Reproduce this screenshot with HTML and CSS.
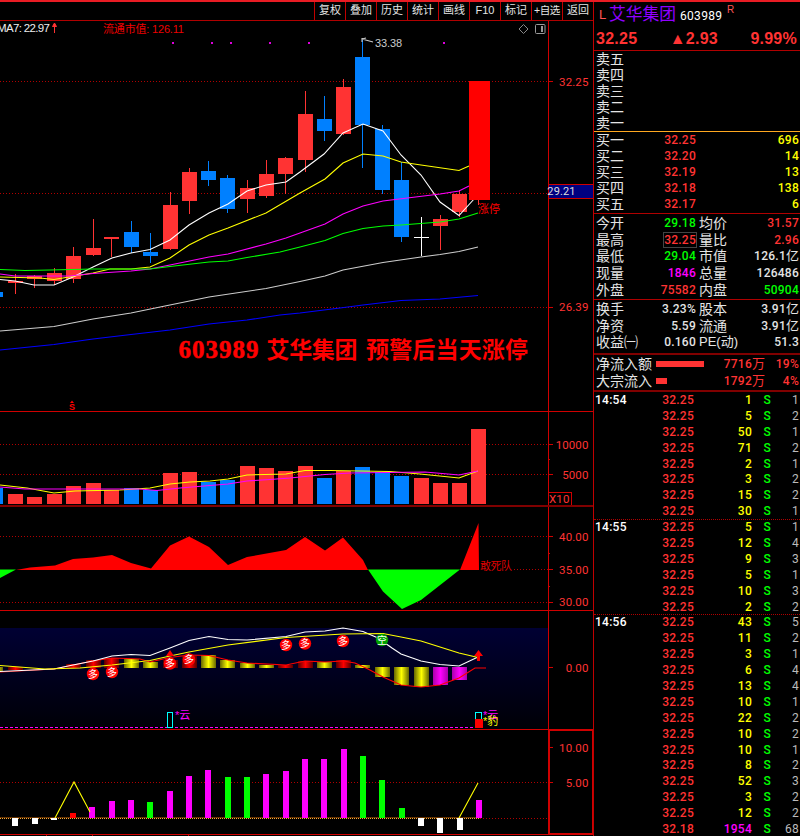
FILE: index.html
```html
<!DOCTYPE html>
<html lang="zh-CN">
<head>
    <meta charset="UTF-8">
    <meta name="viewport" content="width=device-width, initial-scale=1.0">
    <title>艾华集团 603989</title>
    <link rel="stylesheet" href="styles.css">
</head>
<body>
    <div class="app">
        <div class="charts">
            <div class="toolbar">
                <span>复权</span><span>叠加</span><span>历史</span><span>统计</span><span>画线</span><span>F10</span><span>标记</span><span class="tight">+自选</span><span>返回</span>
            </div>

            <!-- K line -->
            <svg class="panel" width="593" height="391" viewBox="0 21 593 391">
                <path class="grid" d="M0 81.5H548M0 193.5H548M0 307.5H548"/>
                <g id="candles"></g>
                <path class="line white" d="M0 279.5L15 281L34 285H54L73 277L93 267L112 258L131 253L150 249.5L170 240L189 225L209 213L228 204L247 191L266 185L286 182L300 172L324 154L343 133L363 124L383 131L401 155L421 175L440 202L459 215.5L475 198"/>
                <path class="line yellow" d="M0 277L40 278L54 279.5L75 276L93 273L110 269H131L150 267L170 258L189 245L209 235L228 228L266 213L300 193L325 179L343 163L363 154L383 156L401 162L421 165L459 170.5L469 166"/>
                <path class="line magenta" d="M0 274L15 276H70L93 273.5L131 271L150 269L170 265L209 257L228 254L266 244L286 238L300 233L325 224L343 214L363 206L383 201L440 194L459 191L469 186"/>
                <path class="line green" d="M0 269.5L25 270.5L50 270L93 269H150L170 266.5L209 262L228 261L247 257.5L280 252L300 247L325 240.5L343 233.5L363 228.5L383 226L401 225L440 222L459 219L478 213"/>
                <path class="line gray" d="M0 331L54 326.5L93 319L131 313L165 306L209 297L266 288.5L300 281.5L325 276L343 270L383 262.5L421 257L440 254.5L459 251.5L478 247"/>
                <path class="line blue" d="M0 350L54 344.5L93 339L131 334.5L170 330L209 324L247 320L280 315L300 313L340 308L363 305L401 300.5L440 299L478 295.5"/>
                <g class="crisp">
                    <rect x="468.5" y="81" width="21" height="119" fill="#f00"/>
                    <rect x="478" y="200" width="1" height="5" fill="#f33"/>
                </g>
                <path class="line gray" d="M362 38V42M362 39L366 38M362 39L373 42"/>
                <g class="dots">
                    <rect x="172" y="42" width="2" height="2"/><rect x="211" y="42" width="2" height="2"/><rect x="230" y="42" width="2" height="2"/><rect x="269" y="42" width="2" height="2"/><rect x="308" y="42" width="2" height="2"/><rect x="443" y="42" width="2" height="2"/>
                </g>
                <text class="t12" x="-3" y="32" fill="#eee" textLength="53">MA7: 22.97</text>
                <path d="M54.5 33V24M52.5 26.5L54.5 23L56.5 26.5Z" stroke="#f33" fill="#f33"/>
                <text class="t11" x="103" y="33" fill="#e00" textLength="81">流通市值: 126.11</text>
                <text class="t11" x="375" y="47" fill="#ccc" textLength="27">33.38</text>
                <path d="M519 29L523.5 24.5L528 29L523.5 33.5Z" fill="none" stroke="#888"/>
                <rect x="535.5" y="24.5" width="9.5" height="9" rx="1" fill="none" stroke="#999"/>
                <rect x="541" y="26" width="2" height="6" fill="#999"/>
                <text class="t11" x="478" y="213" fill="#f00" textLength="22">涨停</text>
                <text class="big num" x="178.5" y="358" textLength="80">603989</text>
                <text class="big" x="266.5" y="358" textLength="91">艾华集团</text>
                <text class="big" x="366" y="358" textLength="162">预警后当天涨停</text>
                <text class="mark" x="69" y="410">S</text>
                <path d="M70 403L72 400.5L74 403Z" fill="#f00"/>
                <g class="axis">
                    <path d="M548.5 20V411M0 411.5H593M548 81.5H553M548 307.5H553"/>
                    <rect x="548.5" y="184.5" width="45" height="14" fill="#000080"/>
                    <text x="588.5" y="86">32.25</text>
                    <text x="575.5" y="195" class="cur">29.21</text>
                    <text x="588.5" y="311">26.39</text>
                </g>
            </svg>

            <!-- volume -->
            <svg class="panel" width="593" height="95" viewBox="0 412 593 95">
                <path class="grid" d="M0 444.5H548M0 474.5H548"/>
                <g id="volume"></g>
                <path class="line yellow" d="M0 485L27 488L54 493L75 491L120 490L150 488L170 484L190 482L210 481L228 479L247 475L286 474L305 470.5H330L390 471.5L420 474L459 478L478 471"/>
                <path class="line magenta" d="M0 487L25 489H140L157 490.5L180 488L228 484L247 481L270 479.5L290 478L325 474.5L350 473L425 472L459 475L478 471"/>
                <g class="axis">
                    <path d="M548.5 412V507M548 444.5H553M548 459.5H550M548 474.5H553M549 492.5H571.5V505"/>
                    <path class="dark" d="M0 506H593"/>
                    <text x="588.5" y="449">10000</text>
                    <text x="588.5" y="479">5000</text>
                    <text x="569.5" y="503">X10</text>
                </g>
            </svg>

            <svg class="panel" width="593" height="104" viewBox="0 507 593 104">
                <path class="grid" d="M0 536.5H548M514 569.5H548M0 602.5H548"/>
                <path fill="#f00" d="M16 570L30 567.5L55 565.5L73 559L93 557.5L112 555L131 563L151 568.5L170 545.5L189 536.5L209 547L228 565L247 557L286 550L305 537L325 550.5L343 537.5L363 560L368 570ZM460 570L478.5 523L479 570Z"/>
                <path fill="#0f0" d="M0 569.5H16L0 578ZM368 569.5L383 591.5L402 609L421 600L460 569.5Z"/>
                <text class="t11" x="480" y="570" fill="#d00" textLength="32">敢死队</text>
                <g class="axis">
                    <path d="M548.5 507V611M0 610.5H593M548 536.5H553M548 553.5H550M548 569.5H553M548 586.5H550M548 602.5H553"/>
                    <text x="588.5" y="541">40.00</text>
                    <text x="588.5" y="574">35.00</text>
                    <text x="588.5" y="606">30.00</text>
                </g>
            </svg>

            <!-- long / short -->
            <svg class="panel" width="593" height="119" viewBox="0 611 593 119">
                <defs>
                    <linearGradient id="sky" x2="0" y2="1"><stop offset="0" stop-color="#000033"/><stop offset="1" stop-color="#000006"/></linearGradient>
                    <linearGradient id="barY"><stop offset="0" stop-color="#660"/><stop offset=".5" stop-color="#ff0"/><stop offset="1" stop-color="#660"/></linearGradient>
                    <linearGradient id="barR"><stop offset="0" stop-color="#500"/><stop offset=".5" stop-color="#f00"/><stop offset="1" stop-color="#500"/></linearGradient>
                    <linearGradient id="barM"><stop offset="0" stop-color="#a0a"/><stop offset=".5" stop-color="#f0f"/><stop offset="1" stop-color="#a0a"/></linearGradient>
                </defs>
                <rect y="628" width="548" height="101" fill="url(#sky)"/>
                <g id="macd"></g>
                <path class="line red" d="M0 672L54 669L73 665L93 661L112 658L140 659L150 662L170 657.5L189 655L209 655.5L228 660L247 663L286 665L305 661L325 662L343 661L355 663L368 669L383 677L401 685L421 687L440 685L459 678L475 668H486"/>
                <path class="line white" d="M0 671.5L54 669L73 665L93 661L112 656L131 654.5L150 655.5L170 648L189 640.5L209 636.5L228 639.5L247 640L286 636.5L305 632L325 631L343 628L363 631.5L378 638L392 648L401 654L421 661L440 664.5L459 666L478 657"/>
                <path class="line yellow" d="M0 665.5L45 669L80 668L112 665L150 660.5L170 656L189 652L228 645L286 637.5L343 634L383 633.5L401 637L421 641L459 653L478 657.5"/>
                <path d="M166 656L170 650L174 656ZM474 656L478.5 650L483 656H480V661H477V656Z" fill="#f00"/>
                <g id="badges"></g>
                <path d="M0 727.5H473" stroke="#f0f" stroke-dasharray="3 2" class="crisp"/>
                <rect x="167.5" y="712.5" width="5" height="15" fill="#000" stroke="#0ff"/>
                <rect x="475.5" y="712.5" width="6" height="15" fill="#000" stroke="#0ff"/>
                <rect x="475" y="719" width="8" height="9" fill="#f00"/>
                <text class="t11" x="175" y="718.5" fill="#f0f">*云</text>
                <text class="t11" x="483" y="718.5" fill="#f0f">*云</text>
                <text class="t11" x="483" y="725" fill="#ff0">*豹</text>
                <g class="axis">
                    <path d="M548.5 611V730M0 729.5H593M548 667.5H553"/>
                    <text x="588.5" y="672">0.00</text>
                </g>
            </svg>

            <svg class="panel" width="593" height="106" viewBox="0 730 593 106">
                <path class="grid" d="M0 782.5H548M480 818.5H548"/>
                <path d="M0 817.5H480" stroke="#630"/>
                <path d="M0 818.5H480" stroke="#fa3" stroke-dasharray="1 1" class="crisp"/>
                <g id="power"></g>
                <path class="line yellow" d="M55 818L74 782L90 812M459 818L478 783"/>
                <g class="axis">
                    <path d="M0 834.5H548M46.5 835V836M92.5 835V836M188.5 835V836M548 747.5H553M548 764.5H550M548 782.5H553"/>
                    <rect class="frame" x="549" y="730" width="44" height="104"/>
                    <text x="588.5" y="752">10.00</text>
                    <text x="588.5" y="787">5.00</text>
                </g>
            </svg>
        </div>

        <div class="quote">
            <div class="title">
                <span class="tag">L</span><span class="name">艾华集团</span><span class="code">603989</span><span class="sup">R</span>
            </div>
            <div class="price"><b>32.25</b><b>▲2.93</b><b>9.99%</b></div>

            <div class="book sell">
                <div><span>卖五</span></div>
                <div><span>卖四</span></div>
                <div><span>卖三</span></div>
                <div><span>卖二</span></div>
                <div><span>卖一</span></div>
            </div>
            <div class="book buy">
                <div><span>买一</span><b class="up">32.25</b><b class="vol">696</b></div>
                <div><span>买二</span><b class="up">32.20</b><b class="vol">14</b></div>
                <div><span>买三</span><b class="up">32.19</b><b class="vol">13</b></div>
                <div><span>买四</span><b class="up">32.18</b><b class="vol">138</b></div>
                <div><span>买五</span><b class="up">32.17</b><b class="vol">6</b></div>
            </div>

            <div class="stats">
                <div><span>今开</span><b class="down">29.18</b><span>均价</span><b class="up">31.57</b></div>
                <div><span>最高</span><b class="up"><i class="box">32.25</i></b><span>量比</span><b class="up">2.96</b></div>
                <div><span>最低</span><b class="down">29.04</b><span>市值</span><b>126.1<em>亿</em></b></div>
                <div><span>现量</span><b class="now">1846</b><span>总量</span><b>126486</b></div>
                <div><span>外盘</span><b class="up">75582</b><span>内盘</span><b class="down">50904</b></div>
            </div>
            <div class="stats second">
                <div><span>换手</span><b>3.23%</b><span>股本</span><b>3.91<em>亿</em></b></div>
                <div><span>净资</span><b>5.59</b><span>流通</span><b>3.91<em>亿</em></b></div>
                <div><span>收益㈠</span><b>0.160</b><span class="pe">PE(动)</span><b>51.3</b></div>
            </div>
            <div class="flow">
                <div><span>净流入额</span><i><u style="width:48px"></u></i><b>7716<em>万</em></b><b>19%</b></div>
                <div><span>大宗流入</span><i><u style="width:11px"></u></i><b>1792<em>万</em></b><b>4%</b></div>
            </div>
            <div class="ticks" id="ticks"></div>
        </div>
    </div>
    <script src="script.js"></script>
</body>
</html>
```

FILE: styles.css
```css
* {
    box-sizing: border-box;
}
body {
    margin: 0;
    background-color: #000;
    color: #e4e4e4;
    font-family: "Liberation Sans", "Noto Sans CJK SC", sans-serif;
    overflow: hidden;
}
.app {
    display: flex;
    width: 800px;
    height: 836px;
    border-top: 2px solid #e81c24;
}
.charts {
    width: 593px;
    display: flex;
    flex-direction: column;
}
.toolbar {
    height: 19px;
    border-bottom: 1px solid #b00000;
    display: flex;
    justify-content: flex-end;
}
.toolbar span {
    width: 31px;
    border-left: 1px solid #c00000;
    font-size: 11px;
    line-height: 17px;
    text-align: center;
    white-space: nowrap;
}
.toolbar .tight {
    font-size: 10.5px;
    letter-spacing: -0.4px;
}
.panel {
    display: block;
    flex: none;
}

/* chart parts */
.grid {
    stroke: #b00000;
    stroke-dasharray: 1 2;
    shape-rendering: crispEdges;
}
.crisp, .dots {
    shape-rendering: crispEdges;
}
.dots {
    fill: #d0d;
}
.line {
    fill: none;
    stroke-width: 1.1;
}
.white { stroke: #fff; }
.gray { stroke: #ccc; }
.yellow { stroke: #ff0; }
.magenta { stroke: #f0f; }
.green { stroke: #0f0; }
.blue { stroke: #00f; }
.red { stroke: #f00; }
.t12 { font-size: 11.5px; }
.t11 { font-size: 11px; }
.big {
    font-size: 23px;
    font-weight: bold;
    fill: #f00;
}
.big.num {
    font-family: "Liberation Serif", serif;
    font-size: 25px;
    stroke: #f00;
    stroke-width: 0.5;
}
.mark {
    font-size: 9px;
    font-weight: bold;
    fill: #f00;
}
.axis path, .axis rect {
    stroke: #d00000;
    shape-rendering: crispEdges;
}
.axis path {
    fill: none;
}
.axis .dark {
    stroke: #800000;
    stroke-width: 2;
}
.axis .frame {
    fill: none;
    stroke-width: 2;
}
.axis text {
    font-family: Roboto, sans-serif;
    font-size: 11.5px;
    letter-spacing: 0.1px;
    fill: #f33;
    text-anchor: end;
}
.axis .cur {
    fill: #ddd;
    font-size: 11px;
}
.badge {
    font-size: 10px;
    fill: #fff;
    text-anchor: middle;
}

/* quote column */
.quote {
    width: 207px;
    border-left: 1px solid #c00000;
    font-size: 14px;
    font-weight: 400;
}
.quote b {
    font-family: Roboto, "Noto Sans CJK SC", sans-serif;
    font-size: 12px;
    font-weight: 500;
    letter-spacing: 0.25px;
    text-align: right;
}
.quote span {
    font-family: "Liberation Sans", "Noto Sans CJK SC", sans-serif;
}
.quote em {
    font-style: normal;
    font-weight: 400;
    font-size: 13px;
    letter-spacing: 0;
}
.title {
    height: 25px;
    display: flex;
    align-items: center;
    line-height: 24px;
}
.title .tag {
    width: 15px;
    padding-left: 5px;
    font-size: 13px;
    color: #f55;
}
.title .name {
    width: 71px;
    font-size: 16.8px;
    color: #9000ff;
}
.quote .title .code {
    width: 47px;
    font-family: Roboto, sans-serif;
    font-size: 12px;
    letter-spacing: 0.3px;
    color: #fff;
    margin-top: 2px;
}
.title .sup {
    font-size: 10px;
    color: #f55;
    margin-top: -9px;
}
.price {
    height: 24px;
    display: flex;
    justify-content: space-between;
    padding: 0 3px 0 2px;
    border-bottom: 1px solid #b00000;
}
.quote .price b {
    font-family: "Liberation Sans", "DejaVu Sans", sans-serif;
    font-size: 16px;
    font-weight: bold;
    line-height: 23px;
    color: #f33;
}
.book {
    height: 81px;
    padding-top: 1px;
    border-bottom: 1px solid #ffa820;
}
.book > div {
    display: grid;
    grid-template-columns: 50px 50px 103px;
    height: 15.9px;
    line-height: 15.9px;
    padding-left: 2px;
}
.book.buy {
    height: 82px;
    border-bottom-color: #b00000;
}
.up, .quote .price b, .flow b {
    color: #f33;
}
.down {
    color: #0f0;
}
.vol {
    color: #ff0;
}
.now {
    color: #f0f;
}
.stats {
    height: 86px;
    padding-top: 1px;
    border-bottom: 1px solid #b00000;
}
.stats.second {
    height: 55px;
    border-bottom: 2px solid #800000;
}
.stats > div {
    display: grid;
    grid-template-columns: 44px 56px 32px 71px;
    padding-left: 2px;
    height: 16.7px;
    line-height: 16.7px;
    white-space: nowrap;
}
.stats span:nth-child(3) {
    padding-left: 3px;
}
.stats .pe {
    font-size: 13px;
}
.box {
    font-style: normal;
    outline: 1px solid #444;
}
.flow {
    height: 37px;
    padding-top: 1px;
    border-bottom: 2px solid #800000;
}
.flow > div {
    display: grid;
    grid-template-columns: 60px 50px 59px 34px;
    padding-left: 2px;
    height: 16.8px;
    line-height: 16.8px;
}
.flow i {
    display: flex;
    align-items: center;
}
.flow u {
    height: 6px;
    background-color: #f33;
}
.ticks > div {
    display: grid;
    grid-template-columns: 50px 49px 58px 19px 28px;
    padding-left: 1px;
    height: 15.9px;
    line-height: 16.5px;
}
.ticks .sep {
    border-top: 1px dotted #b00000;
    line-height: 14.5px;
}
.ticks .time {
    text-align: left;
    color: #fff;
}
.ticks .cnt {
    font-weight: 400;
    color: #bbb;
}
```

FILE: script.js
```js
const RED = '#ff3333';
const BLUE = '#0080ff';
const step = 19.32;

function rect(x, y, w, h, fill) {
    return `<rect x="${x}" y="${y}" width="${w}" height="${h}" fill="${fill}" shape-rendering="crispEdges"/>`;
}

// left, top, bottom of body, wick high, wick low, colour
const candles = [
    [-12, 292, 297, 292, 297, BLUE],
    [8, 281, 283, 274, 294, RED], [27, 276, 279, 275, 288, RED],
    [47, 273, 281, 268, 285, RED], [66, 256, 279, 247, 283, RED],
    [86, 248, 255, 219, 256, RED], [104, 237, 239, 237, 257, RED],
    [124, 232, 247, 221, 253, BLUE], [143, 252, 256, 233, 263, BLUE],
    [163, 205, 249, 192, 250, RED], [182, 172, 201, 168, 214, RED],
    [201, 171, 180, 161, 186, BLUE], [220, 178, 209, 175, 213, BLUE],
    [240, 188, 199, 180, 213, RED], [259, 174, 196, 160, 198, RED],
    [278, 158, 174, 157, 194, RED], [298, 114, 160, 91, 172, RED],
    [317, 119, 131, 96, 141, BLUE], [336, 87, 134, 79, 135, RED],
    [355, 57, 125, 40, 168, BLUE], [375, 129, 190, 125, 194, BLUE],
    [394, 180, 237, 162, 242, BLUE], [414, 237, 238, 217, 256, '#fff'],
    [433, 219, 226, 215, 250, RED], [452, 194, 212, 190, 217, RED]
];
document.getElementById('candles').innerHTML = candles.map(c =>
    rect(c[0], c[1], 15, c[2] - c[1], c[5]) + rect(c[0] + 7, c[3], 1, c[4] - c[3], c[5])
).join('');

const volume = [488, 494, 497, 494, 486, 483, 490, 488, 490, 473, 472, 482, 480, 466, 468, 471, 466, 478, 471, 467, 472, 476, 478, 483, 483, 429];
document.getElementById('volume').innerHTML = volume.map((y, i) => {
    const c = candles[i] || [471];
    return rect(c[0], y, 15, 504 - y, c[5] === BLUE ? BLUE : RED);
}).join('');

// index, value edge, gradient
const macd = [
    [0, 671, 'Y'], [1, 670, 'R'], [4, 664, 'R'], [5, 660, 'R'], [6, 658, 'R'], [7, 659, 'Y'], [8, 662, 'Y'],
    [9, 660, 'R'], [10, 656, 'R'], [11, 655, 'Y'], [12, 660, 'Y'], [13, 663, 'Y'], [14, 665, 'Y'], [15, 665, 'R'],
    [16, 661, 'R'], [17, 662, 'Y'], [18, 660, 'R'], [19, 665, 'Y'], [20, 677, 'Y'], [21, 685, 'Y'],
    [22, 687, 'Y'], [23, 685, 'M'], [24, 680, 'M']
];
document.getElementById('macd').innerHTML = macd.map(([i, y, g]) => {
    const top = Math.min(y, 667);
    const bottom = Math.max(y, 668);
    return rect(candles[i][0], top, 15, bottom - top, `url(#bar${g})`);
}).join('');

const badges = [[93, 674], [112, 672], [170, 663.5], [189, 659.5], [286, 645], [305, 643.5], [343, 641], [382, 640, 1]];
document.getElementById('badges').innerHTML = badges.map(([x, y, s]) =>
    `<circle cx="${x}" cy="${y}" r="6.2" fill="${s ? '#00a000' : '#f00'}"/><text class="badge" x="${x}" y="${y + 3.7}">${s ? '空' : '多'}</text>`
).join('');

const power = [
    [826, 'w'], [824, 'w'], [820, 'w'], [813, 'r'], [807, 'm'], [801, 'm'], [800, 'm'], [802, 'g'], [791, 'm'],
    [776, 'm'], [770, 'm'], [777, 'g'], [777, 'g'], [774, 'm'], [771, 'm'], [759, 'm'], [759, 'm'], [749, 'm'],
    [756, 'g'], [780, 'g'], [808, 'g'], [826, 'w'], [833, 'w'], [830, 'w'], [800, 'm']
];
const fills = { w: '#fff', r: '#f00', m: '#f0f', g: '#0f0' };
document.getElementById('power').innerHTML = power.map(([y, c], i) =>
    rect(Math.round(12.2 + i * step), Math.min(y, 818), 6, Math.abs(818 - y), fills[c])
).join('');

// time, volume, count
const ticks = [
    ['14:54', 1, 1], ['', 5, 2], ['', 50, 1], ['', 71, 2], ['', 2, 1], ['', 3, 2], ['', 15, 2], ['', 30, 1],
    ['14:55', 5, 1], ['', 12, 4], ['', 9, 3], ['', 5, 1], ['', 10, 3], ['', 2, 2],
    ['14:56', 43, 5], ['', 11, 2], ['', 3, 1], ['', 6, 4], ['', 13, 4], ['', 10, 1], ['', 22, 2], ['', 10, 2],
    ['', 10, 1], ['', 8, 2], ['', 52, 3], ['', 3, 2], ['', 12, 2], ['', 1954, 68]
];
document.getElementById('ticks').innerHTML = ticks.map(([time, vol, cnt], i) =>
    `<div class="${time && i ? 'sep' : ''}"><b class="time">${time}</b><b class="up">${vol > 1000 ? '32.18' : '32.25'}</b>` +
    `<b class="${vol > 1000 ? 'now' : 'vol'}">${vol}</b><b class="down">S</b><b class="cnt">${cnt}</b></div>`
).join('');
```
